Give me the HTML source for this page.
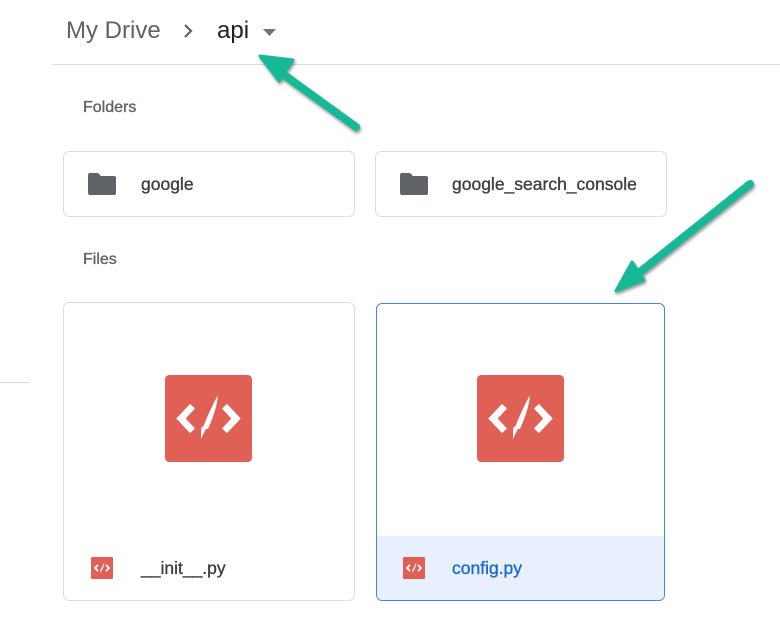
<!DOCTYPE html>
<html><head><meta charset="utf-8"><style>
body{margin:0;width:780px;height:625px;background:#fff;font-family:"Liberation Sans",Arial,sans-serif;position:relative;overflow:hidden}
.a{position:absolute}
.card{position:absolute;border:1px solid #dadce0;border-radius:6px;background:#fff;box-sizing:border-box}
.lbl{position:absolute;font-size:16px;color:#5f6368;-webkit-text-stroke:0.35px #5f6368}
.name{position:absolute;font-size:17.5px;color:#3c4043;-webkit-text-stroke:0.35px #3c4043}
</style></head><body>
<div class="a" style="left:66px;top:17px;font-size:24px;color:#5f6368">My Drive</div>
<svg class="a" style="left:181px;top:22px" width="14" height="18" viewBox="0 0 14 18"><path d="M4 3l6 6-6 6" fill="none" stroke="#5f6368" stroke-width="2.2"/></svg>
<div class="a" style="left:217px;top:17px;font-size:24px;color:#202124">api</div>
<svg class="a" style="left:263px;top:29px" width="14" height="8"><path d="M0 0h13l-6.5 7z" fill="#757575"/></svg>
<div class="a" style="left:52px;top:64px;width:728px;height:1px;background:#dadce0"></div>
<div class="a" style="left:0;top:382px;width:30px;height:1px;background:#dadce0"></div>
<div class="lbl" style="left:83px;top:99px">Folders</div>
<div class="lbl" style="left:83px;top:251px">Files</div>

<div class="card" style="left:63px;top:151px;width:292px;height:66px"></div>
<svg class="a" style="left:88px;top:173px" width="28" height="22" viewBox="0 0 28 22"><path d="M2 0h8l3 3h13a2 2 0 0 1 2 2v15a2 2 0 0 1-2 2H2a2 2 0 0 1-2-2V2a2 2 0 0 1 2-2z" fill="#5f6368"/></svg>
<div class="name" style="left:141px;top:174px">google</div>
<div class="card" style="left:375px;top:151px;width:292px;height:66px"></div>
<svg class="a" style="left:400px;top:173px" width="28" height="22" viewBox="0 0 28 22"><path d="M2 0h8l3 3h13a2 2 0 0 1 2 2v15a2 2 0 0 1-2 2H2a2 2 0 0 1-2-2V2a2 2 0 0 1 2-2z" fill="#5f6368"/></svg>
<div class="name" style="left:452px;top:174px">google_search_console</div>

<div class="card" style="left:63px;top:302px;width:292px;height:299px"></div>
<div class="card" style="left:376px;top:303px;width:289px;height:298px;border-color:#4a80e8;overflow:hidden"><div style="position:absolute;left:0;right:0;top:232px;bottom:0;background:#e8f0fe"></div></div>

<svg width="0" height="0" style="position:absolute"><defs><symbol id="ic" viewBox="0 0 24 24"><rect width="24" height="24" rx="1.2" fill="#e06055"/><path d="M7.6 8.6L4.4 12l3.2 3.4M16.4 8.6l3.2 3.4-3.2 3.4" fill="none" stroke="#fff" stroke-width="1.9"/><path d="M14.6 5.6C14.5 8 13.4 11.5 11.9 14.8L11.2 15l-1.3 2.7 0.1-3.2 0.6-0.4C11.9 11 13.2 8 14.6 5.6z" fill="#fff"/></symbol></defs></svg>
<svg class="a" style="left:165px;top:375px" width="87" height="87"><use href="#ic"/></svg>
<svg class="a" style="left:477px;top:375px" width="87" height="87"><use href="#ic"/></svg>
<svg class="a" style="left:91px;top:557px" width="22" height="22"><use href="#ic"/></svg>
<svg class="a" style="left:403px;top:557px" width="22" height="22"><use href="#ic"/></svg>
<div class="name" style="left:141px;top:558px">__init__.py</div>
<div class="name" style="left:452px;top:558px;color:#1967d2;-webkit-text-stroke:0.35px #1967d2">config.py</div>

<svg class="a" style="left:0;top:0" width="780" height="625">
<defs><filter id="sh"><feDropShadow dx="1" dy="2" stdDeviation="1.5" flood-opacity="0.45"/></filter></defs>
<g filter="url(#sh)" stroke="#16b896" fill="#16b896" stroke-linecap="round">
<line x1="356" y1="127" x2="280" y2="72" stroke-width="8"/>
<path d="M260 56l33 4-14 21z" stroke-width="3" stroke-linejoin="round"/>
<line x1="750" y1="184" x2="640" y2="272" stroke-width="8"/>
<path d="M616 291l16-29 12 18z" stroke-width="3" stroke-linejoin="round"/>
</g></svg>
</body></html>
